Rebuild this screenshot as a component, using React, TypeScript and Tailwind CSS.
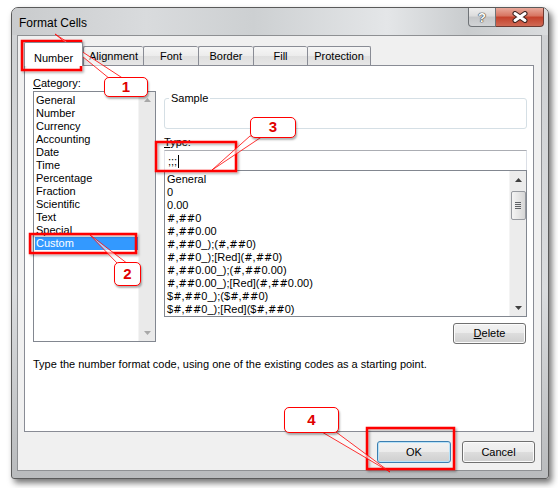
import React from 'react';

const categories = [
  'General',
  'Number',
  'Currency',
  'Accounting',
  'Date',
  'Time',
  'Percentage',
  'Fraction',
  'Scientific',
  'Text',
  'Special',
  'Custom',
];

const formats = [
  'General',
  '0',
  '0.00',
  '#,##0',
  '#,##0.00',
  '#,##0_);(#,##0)',
  '#,##0_);[Red](#,##0)',
  '#,##0.00_);(#,##0.00)',
  '#,##0.00_);[Red](#,##0.00)',
  '$#,##0_);($#,##0)',
  '$#,##0_);[Red]($#,##0)',
];

const tabs = [
  { label: 'Alignment', w: 'w-[60px]' },
  { label: 'Font', w: 'w-[55px]' },
  { label: 'Border', w: 'w-[55px]' },
  { label: 'Fill', w: 'w-[54px]' },
  { label: 'Protection', w: 'w-[64px]' },
];

const btnBg =
  'bg-[linear-gradient(180deg,#f2f2f2_0%,#ebebeb_50%,#dddddd_50%,#cfcfcf_100%)]';

function WinButton({
  children,
  className = '',
  focused = false,
}: {
  children: React.ReactNode;
  className?: string;
  focused?: boolean;
}) {
  return (
    <div
      className={`flex items-center justify-center rounded-[3px] border text-[11px] text-black ${btnBg} ${
        focused
          ? 'border-[#3c7fb1] shadow-[inset_0_0_0_1px_#b9e2f8]'
          : 'border-[#707070] shadow-[inset_0_0_0_1px_#fbfbfb]'
      } ${className}`}
    >
      {children}
    </div>
  );
}

function Arrow({ up, color }: { up: boolean; color: string }) {
  return (
    <svg width="7" height="4" viewBox="0 0 7 4">
      <polygon points={up ? '0,4 7,4 3.5,0' : '0,0 7,0 3.5,4'} fill={color} />
    </svg>
  );
}

function Callout({ n, className }: { n: string; className: string }) {
  return (
    <div
      className={`absolute flex items-center justify-center rounded-[5px] border-[1.5px] border-[#f00] bg-white text-[15px] font-bold text-[#e00000] shadow-[1px_2px_2px_rgba(0,0,0,0.3)] ${className}`}
    >
      {n}
    </div>
  );
}

// tahoma's '#' is much wider than arial's, borrow dejavu's for it
function FormatCode({ code }: { code: string }) {
  return (
    <>
      {code.split('').map((ch, i) =>
        ch === '#' ? (
          <span key={i} className="font-['DejaVu_Sans'] text-[10px]">
            #
          </span>
        ) : (
          <span key={i}>{ch}</span>
        )
      )}
    </>
  );
}

export default function App() {
  return (
    <div className="relative h-[488px] w-[558px] overflow-hidden bg-white pl-[11px] pt-[7px] font-['Liberation_Sans',Arial,sans-serif] text-[11px] text-black">
      {/* window */}
      <div className="flex h-[472px] w-[538px] flex-col rounded-t-[7px] rounded-b-[3px] border border-[#5a5a5a] bg-[linear-gradient(180deg,#d3d5d7_0%,#cfd1d3_8%,#dadcde_60%,#b9bbbd_100%)] shadow-[3px_4px_6px_rgba(0,0,0,0.55)]">
        {/* title bar */}
        <div className="flex h-[27px] items-start rounded-t-[6px] bg-[linear-gradient(90deg,#c9cbcd_0%,#d9dbdd_25%,#cdd0d2_45%,#e4e6e8_70%,#c9ccce_85%,#dadcde_100%)]">
          <div className="pl-[7px] pt-[8px] text-[12px] leading-[15px] text-black">Format Cells</div>
          <div className="ml-auto mr-[4px] flex">
            <div className="flex h-[19px] w-[28px] items-center justify-center rounded-bl-[4px] border border-t-0 border-[#6f7377] bg-[linear-gradient(180deg,#eeeeee_0%,#dcdcdc_45%,#c4c6c8_50%,#d2d4d6_100%)]">
              <span className="text-[13px] font-bold leading-none text-white [text-shadow:0_0_1px_#333,0_0_1px_#333,0_0_1px_#333]">?</span>
            </div>
            <div className="flex h-[19px] w-[48px] items-center justify-center rounded-br-[4px] border border-l-0 border-t-0 border-[#6e3a32] bg-[linear-gradient(180deg,#e9a99b_0%,#d7735f_45%,#c4402a_50%,#d06a55_100%)]">
              <svg width="18" height="12" viewBox="0 0 18 12">
                <path d="M4 2.5 L14 9.5 M14 2.5 L4 9.5" stroke="#3b2320" strokeWidth="5" strokeLinecap="round" />
                <path d="M4 2.5 L14 9.5 M14 2.5 L4 9.5" stroke="#ffffff" strokeWidth="3" strokeLinecap="round" />
              </svg>
            </div>
          </div>
        </div>

        {/* client area */}
        <div className="ml-[5px] flex h-[436px] w-[525px] flex-col border border-[#8e9093] bg-[#f0f0f0]">
          {/* tab strip */}
          <div className="ml-[6px] mt-[6px] flex items-end">
            <div className="relative z-10 -mb-px flex h-[24px] w-[59px] items-start justify-center rounded-t-[2px] border border-b-0 border-[#898c95] bg-white pt-[7px]">
              Number
            </div>
            {tabs.map((t, i) => (
              <div
                key={t.label}
                className={`flex h-[19px] ${t.w} items-center justify-center rounded-t-[2px] border-l border-t border-[#898c95] bg-[linear-gradient(180deg,#f6f6f6_0%,#ececec_50%,#dfdfdf_51%,#e6e6e6_100%)] pt-px ${
                  i === tabs.length - 1 ? 'border-r' : ''
                }`}
              >
                {t.label}
              </div>
            ))}
          </div>

          {/* tab panel */}
          <div className="ml-[6px] flex h-[367px] w-[510px] flex-col border border-[#898c95] bg-white pl-[8px]">
            <div className="flex">
              {/* category column */}
              <div className="flex w-[123px] flex-col pt-[10px]">
                <div className="leading-[15px]">
                  <span className="underline">C</span>ategory:
                </div>
                <div className="flex h-[251px] border border-[#828790] bg-white">
                  <div className="flex-1 pt-[2px]">
                    {categories.map((c) => (
                      <div
                        key={c}
                        className={`ml-px h-[13px] pl-[1px] leading-[13px] ${
                          c === 'Custom' ? 'bg-[#3399ff] text-white' : ''
                        }`}
                      >
                        {c}
                      </div>
                    ))}
                  </div>
                  <div className="flex w-[17px] flex-col items-center justify-between border-l border-[#f4f4f4] bg-[#eaeaea] py-[6px]">
                    <Arrow up color="#a8a8a8" />
                    <Arrow up={false} color="#a8a8a8" />
                  </div>
                </div>
              </div>

              {/* type column */}
              <div className="ml-[8px] flex w-[363px] flex-col">
                <div className="relative mt-[32px] h-[31px] rounded-[3px] border border-[#d5dfe5]">
                  <span className="absolute -top-[8px] left-[4px] bg-white px-[2px] leading-[15px]">Sample</span>
                </div>
                <div className="mt-[6px] leading-[15px]">
                  <span className="underline">T</span>ype:
                </div>
                <div className="flex h-[21px] items-center border border-[#abadb3] border-b-[#e3e9ef] border-l-[#e2e3ea] border-r-[#dbdfe6] bg-white pl-[3px] pt-px">
                  <span>;;;</span>
                  <span className="ml-px h-[13px] w-px bg-black" />
                </div>
                <div className="-mt-px flex h-[147px] border border-[#828790] bg-white">
                  <div className="flex-1 pl-[2px] pt-[2px]">
                    {formats.map((f) => (
                      <div key={f} className="h-[13px] leading-[13px] whitespace-nowrap">
                        <FormatCode code={f} />
                      </div>
                    ))}
                  </div>
                  <div className="flex w-[17px] flex-col items-center bg-[#ececec] border-l border-[#f4f4f4]">
                    <div className="flex h-[17px] items-center">
                      <Arrow up color="#404040" />
                    </div>
                    <div className="mt-[3px] flex h-[29px] w-[15px] flex-col items-center justify-center gap-[1px] rounded-[2px] border border-[#979aa0] bg-[linear-gradient(90deg,#f4f4f4_0%,#e6e6e6_50%,#d6d6d6_100%)]">
                      <div className="h-px w-[6px] bg-[#5f6266]" />
                      <div className="h-px w-[6px] bg-[#5f6266]" />
                      <div className="h-px w-[6px] bg-[#5f6266]" />
                      <div className="h-px w-[6px] bg-[#5f6266]" />
                    </div>
                    <div className="mt-auto flex h-[17px] items-center">
                      <Arrow up={false} color="#404040" />
                    </div>
                  </div>
                </div>
                <WinButton className="mr-[1px] mt-[6px] h-[21px] w-[73px] self-end">
                  <span>
                    <span className="underline">D</span>elete
                  </span>
                </WinButton>
              </div>
            </div>
            <div className="mt-[13px] leading-[15px]">
              Type the number format code, using one of the existing codes as a starting point.
            </div>
          </div>

          {/* dialog buttons */}
          <div className="mr-[6px] mt-[9px] flex justify-end gap-[11px]">
            <WinButton focused className="h-[22px] w-[74px]">
              OK
            </WinButton>
            <WinButton className="h-[22px] w-[73px]">Cancel</WinButton>
          </div>
        </div>
      </div>

      {/* annotations */}
      <svg className="pointer-events-none absolute left-0 top-0" width="558" height="488">
        <defs>
          <filter id="sh" x="-20%" y="-20%" width="140%" height="140%">
            <feDropShadow dx="1.5" dy="1.5" stdDeviation="1" floodColor="#000" floodOpacity="0.35" />
          </filter>
        </defs>
        <g fill="none" stroke="#ff0000" strokeWidth="2.5" filter="url(#sh)">
          <rect x="22" y="41" width="59" height="29" />
          <rect x="30" y="234" width="106" height="19" />
          <rect x="156" y="142" width="80" height="29" />
          <rect x="367" y="428" width="87" height="41" />
        </g>
        <g fill="#ffffff" fillOpacity="0.55" stroke="#ff0000" strokeWidth="0.8">
          <polygon points="55,34 110,79 124,79" />
          <polygon points="89,234 118,264 128,264" />
          <polygon points="212,170 250,136 263,136" />
          <polygon points="390,472 322,432 336,432" />
        </g>
      </svg>
      <Callout n="1" className="left-[104px] top-[77px] h-[20px] w-[44px]" />
      <Callout n="2" className="left-[114px] top-[262px] h-[24px] w-[27px]" />
      <Callout n="3" className="left-[250px] top-[117px] h-[21px] w-[46px]" />
      <Callout n="4" className="left-[284px] top-[407px] h-[26px] w-[55px]" />
    </div>
  );
}
